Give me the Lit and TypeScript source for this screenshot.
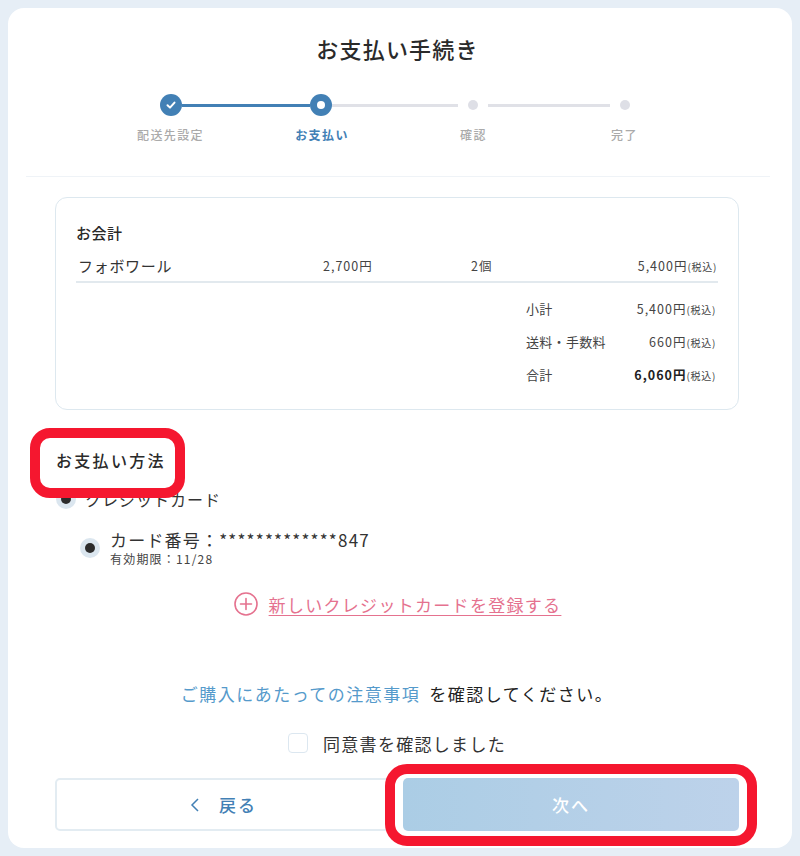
import { LitElement, html, css } from "lit";
import { customElement } from "lit/decorators.js";

@customElement("app-root")
export class AppRoot extends LitElement {
  static styles = css`
    :host { display: block; width: 800px; height: 856px; background: #e6eef6; padding: 8px; box-sizing: border-box; font-family: "Noto Sans CJK JP", "Noto Sans", sans-serif; color: #222; position: relative; overflow: hidden; }
    .panel { background: #fff; border-radius: 16px; height: 840px; display: flex; flex-direction: column; padding: 0 18px; box-sizing: border-box; }
    h1 { margin: 25px 5px 0 0; height: 30px; line-height: 30px; font-size: 22px; font-weight: 500; letter-spacing: 1.2px; text-align: center; color: #2a2a2a; }
    .track { display: flex; align-items: center; height: 22px; margin: 31px 0 0 134px; }
    .dot { border-radius: 50%; flex: none; display: flex; align-items: center; justify-content: center; }
    .dot.big { width: 22px; height: 22px; background: #4280b5; }
    .dot.small { width: 10px; height: 10px; background: #dedfe6; margin-left: 10px; }
    .dot .hole { width: 8px; height: 8px; border-radius: 50%; background: #fff; }
    .seg { height: 3px; flex: none; }
    .seg.on { width: 128px; background: #4280b5; }
    .seg.off { background: #e0e1e7; width: 126px; }
    .seg.off.second { width: 122px; margin-left: 10px; }
    .labels { display: grid; grid-template-columns: 151px 152px 151px 151px; margin: 10px 0 0 69px; }
    .labels span { text-align: center; font-size: 12px; line-height: 18px; font-weight: 500; letter-spacing: 1.4px; color: #aaa; }
    .labels span.cur { color: #4280b5; font-weight: 700; }
    .rule { height: 1px; background: #eff3f7; margin: 32px 4px 0 0; }
    .bill { margin: 20px 35px 0 29px; height: 213px; border: 1.5px solid #dde8ef; border-radius: 12px; box-sizing: border-box; padding: 25px 20px 0; }
    .bill h2 { margin: 0; font-size: 15px; line-height: 20px; font-weight: 500; letter-spacing: 0.5px; color: #2a2a2a; }
    .item { display: grid; grid-template-columns: 245px 148px 1fr auto; height: 32px; align-items: center; border-bottom: 2px solid #e2e9ee; padding-left: 2px; margin-top: 6px; }
    .item .name { font-size: 15px; letter-spacing: 0.7px; color: #333; }
    .num { font-size: 12.5px; color: #444; letter-spacing: 1px; white-space: nowrap; }
    .tax { font-size: 10px; color: #444; letter-spacing: 0.7px; }
    .price { text-align: right; padding-right: 1px; }
    .totals { display: flex; flex-direction: column; gap: 13px; margin: 15px 0 0 450px; width: 193px; }
    .totals div { display: flex; justify-content: space-between; height: 20px; align-items: center; font-size: 13px; letter-spacing: 0.3px; color: #444; padding-right: 3px; }
    .totals b { font-weight: 700; color: #222; }
    .method { margin: 39px 0 0 30px; font-size: 16px; font-weight: 500; line-height: 22px; letter-spacing: 2.3px; position: relative; z-index: 2; color: #2a2a2a; }
    .radio { width: 20px; height: 20px; border-radius: 50%; background: #dbe6ef; display: flex; align-items: center; justify-content: center; flex: none; }
    .radio i { width: 10px; height: 10px; border-radius: 50%; background: #2c2c2c; display: block; }
    .credit { display: flex; align-items: center; gap: 9px; margin: 17px 0 0 30px; font-size: 16px; letter-spacing: 1px; line-height: 22px; color: #333; }
    .saved { display: flex; align-items: center; gap: 10px; margin: 19px 0 0 54px; }
    .saved .no { font-size: 17px; line-height: 22px; letter-spacing: 1.2px; color: #333; }
    .saved .exp { font-size: 12px; line-height: 15px; letter-spacing: 1.2px; color: #444; }
    .add { display: flex; align-items: center; justify-content: center; gap: 11px; margin: 25px 0 0 -5px; color: #e5728f; height: 26px; }
    .add a { font-size: 17px; letter-spacing: 1.3px; text-decoration: underline; text-underline-offset: 3px; color: #e5728f; }
    .note { margin: 64px 0 0 -6px; text-align: center; font-size: 17px; letter-spacing: 1.5px; line-height: 26px; color: #222; }
    .note a { color: #559acb; margin-right: 9px; }
    .agree { display: flex; align-items: center; justify-content: center; gap: 15px; margin: 23px 0 0 -6px; font-size: 17px; letter-spacing: 1.3px; height: 26px; color: #333; }
    .box { width: 20px; height: 20px; border: 1.5px solid #dce7f0; border-radius: 4px; box-sizing: border-box; }
    .btns { display: flex; gap: 12px; margin: 22px 0 0 29px; }
    .btn { width: 336px; height: 53px; border-radius: 5px; box-sizing: border-box; display: flex; align-items: center; justify-content: center; font-size: 17px; letter-spacing: 2px; font-weight: 500; }
    .back { border: 2px solid #e3ecf2; color: #4280b5; gap: 18px; }
    .next { background: linear-gradient(90deg, #abcde5, #bdd2ea); color: #fff; position: relative; z-index: 2; }
    .mark { position: absolute; border: 10px solid #f5172f; box-sizing: border-box; z-index: 1; }
    .mark.a { left: 30px; top: 428px; width: 155px; height: 70px; border-radius: 20px; background: #fff; }
    .mark.b { left: 385px; top: 764px; width: 372px; height: 82px; border-radius: 22px; background: #fff; }
  `;
  render() {
    const tax = html`<span class="tax">(税込)</span>`;
    return html`
      <div class="panel">
        <h1>お支払い手続き</h1>
        <div class="track">
          <span class="dot big"><svg width="12" height="12" viewBox="0 0 12 12" fill="none" stroke="#fff" stroke-width="2" stroke-linecap="round" stroke-linejoin="round"><path d="M2.5 6.2 5 8.6 9.5 3.6"/></svg></span>
          <span class="seg on"></span>
          <span class="dot big"><span class="hole"></span></span>
          <span class="seg off"></span>
          <span class="dot small"></span>
          <span class="seg off second"></span>
          <span class="dot small"></span>
        </div>
        <div class="labels"><span>配送先設定</span><span class="cur">お支払い</span><span>確認</span><span>完了</span></div>
        <div class="rule"></div>
        <section class="bill">
          <h2>お会計</h2>
          <div class="item"><span class="name">フォボワール</span><span class="num">2,700円</span><span class="num">2個</span><span class="num price">5,400円${tax}</span></div>
          <div class="totals">
            <div><span>小計</span><span class="num">5,400円${tax}</span></div>
            <div><span>送料・手数料</span><span class="num">660円${tax}</span></div>
            <div><span>合計</span><span class="num"><b>6,060円</b>${tax}</span></div>
          </div>
        </section>
        <div class="method">お支払い方法</div>
        <div class="credit"><span class="radio"><i></i></span>クレジットカード</div>
        <div class="saved"><span class="radio"><i></i></span><div><div class="no">カード番号：*************847</div><div class="exp">有効期限：11/28</div></div></div>
        <div class="add"><svg width="24" height="24" viewBox="0 0 24 24" fill="none" stroke="#e5728f" stroke-width="1.6"><circle cx="12" cy="12" r="11"/><path d="M12 6.5v11M6.5 12h11" stroke-linecap="round"/></svg><a>新しいクレジットカードを登録する</a></div>
        <div class="note"><a>ご購入にあたっての注意事項</a>を確認してください。</div>
        <div class="agree"><span class="box"></span>同意書を確認しました</div>
        <div class="btns">
          <div class="btn back"><svg width="12" height="14" viewBox="0 0 12 14" fill="none" stroke="#4280b5" stroke-width="1.5"><path d="M9 1 3 7l6 6"/></svg>戻る</div>
          <div class="btn next">次へ</div>
        </div>
      </div>
      <div class="mark a"></div>
      <div class="mark b"></div>
    `;
  }
}
